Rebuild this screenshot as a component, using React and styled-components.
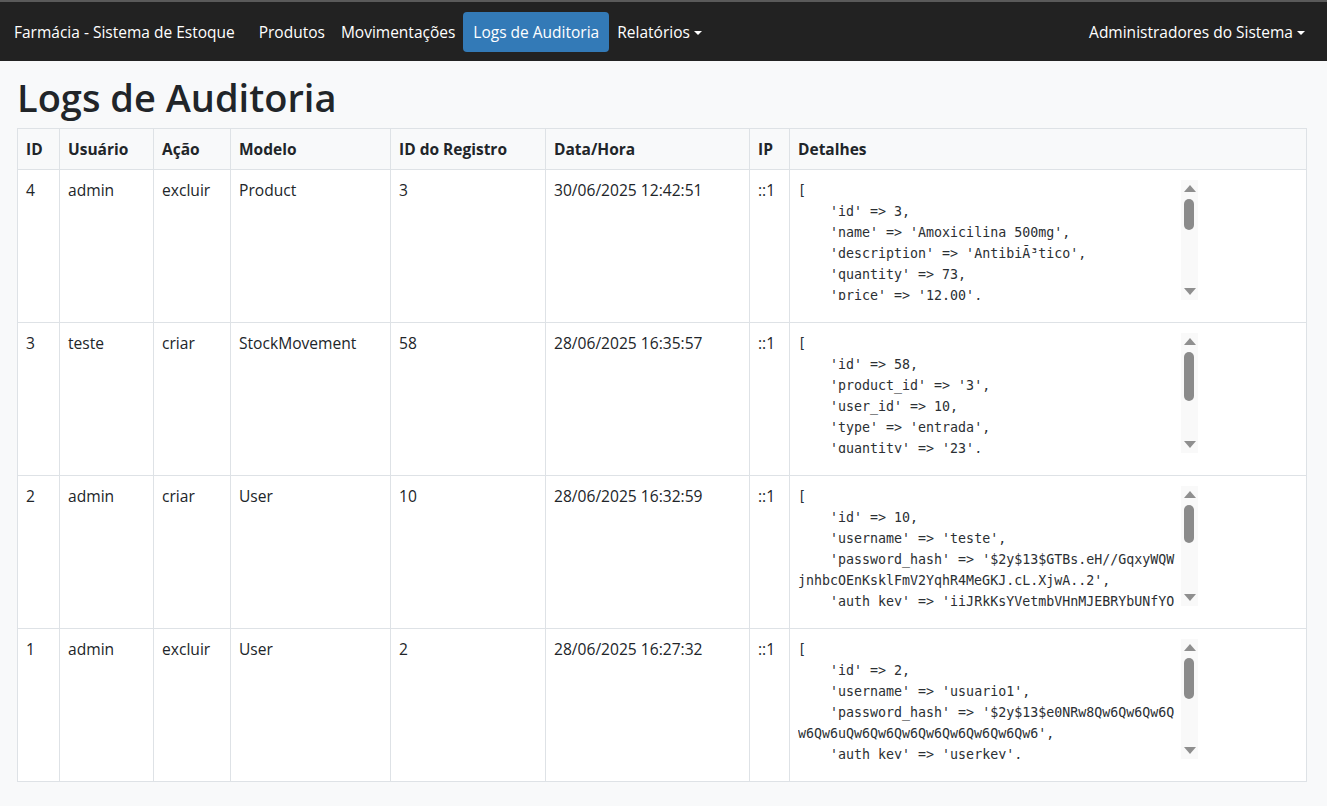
import React from 'react';
import styled, { createGlobalStyle } from 'styled-components';

const GlobalStyle = createGlobalStyle`
    html, body {
        margin: 0;
        padding: 0;
        background: #f8f9fa;
        color: #212529;
        font-family: "Open Sans", "Noto Sans", sans-serif;
    }
    * {
        box-sizing: border-box;
    }
`;

const Navbar = styled.nav`
    display: flex;
    align-items: center;
    height: 61px;
    padding: 0 14px;
    background: #222222;
    border-top: 2px solid #5a5a5a;
    font-size: 15.5px;
`;

const Brand = styled.a`
    color: #fff;
    margin-right: 16px;
    white-space: nowrap;
`;

const NavList = styled.div`
    display: flex;
    align-items: center;
    flex: 1;
`;

const NavLink = styled.a`
    display: flex;
    align-items: center;
    height: 40px;
    padding: 0 ${(p) => (p.$active ? '10px' : '8px')};
    border-radius: 4px;
    color: #fff;
    white-space: nowrap;
    background: ${(p) => (p.$active ? '#337ab7' : 'transparent')};
`;

const Caret = styled.span`
    display: inline-block;
    margin-left: 4px;
    border-top: 4px solid #fff;
    border-left: 4px solid transparent;
    border-right: 4px solid transparent;
    transform: translateY(1px);
`;

const Main = styled.main`
    padding: 12px 21px 24px 17px;
`;

const Title = styled.h1`
    margin: 0 0 7px;
    font-size: 38px;
    font-weight: 600;
    line-height: 48px;
`;

const Table = styled.table`
    width: 1289px;
    border-collapse: collapse;
    table-layout: fixed;
    background: #fff;
    font-size: 15.6px;
`;

const Th = styled.th`
    height: 41px;
    padding: 8px;
    text-align: left;
    font-size: 15.5px;
    font-weight: 700;
    line-height: 24px;
    background: #f8f9fa;
    border: 1px solid #dee2e6;
`;

const Td = styled.td`
    padding: 8px;
    vertical-align: top;
    line-height: 24px;
    font-weight: 400;
    border: 1px solid #dee2e6;
`;

const ScrollArea = styled.div`
    display: flex;
    width: 400px;
    height: 120px;
    margin: 2px 0 14px;
`;

const Code = styled.pre`
    flex: 1;
    margin: 0;
    overflow: hidden;
    font-family: "DejaVu Sans Mono", "Liberation Mono", monospace;
    font-size: 13.3px;
    line-height: 21px;
    white-space: pre-wrap;
    word-break: break-all;
    color: #2b2f33;
`;

const Scrollbar = styled.div`
    display: flex;
    flex-direction: column;
    width: 17px;
    background: #f9f9f9;
`;

const Arrow = styled.div`
    display: flex;
    align-items: center;
    justify-content: center;
    height: 17px;

    &::before {
        content: '';
        border-left: 6px solid transparent;
        border-right: 6px solid transparent;
        ${(p) => (p.$down ? 'border-top: 7px solid #8f8f8f;' : 'border-bottom: 7px solid #8f8f8f;')}
    }
`;

const Track = styled.div`
    flex: 1;
    padding: 2px 4px 0 3px;
`;

const Thumb = styled.div`
    width: 10px;
    border-radius: 5px;
    background: #8b8b8b;
`;

const columns = [
    { label: 'ID', width: 42 },
    { label: 'Usuário', width: 94 },
    { label: 'Ação', width: 77 },
    { label: 'Modelo', width: 160 },
    { label: 'ID do Registro', width: 155 },
    { label: 'Data/Hora', width: 204 },
    { label: 'IP', width: 40 },
    { label: 'Detalhes', width: 517 },
];

const logs = [
    {
        id: 4, user: 'admin', action: 'excluir', model: 'Product', recordId: 3,
        date: '30/06/2025 12:42:51', ip: '::1', lines: 16,
        details: `[
    'id' => 3,
    'name' => 'Amoxicilina 500mg',
    'description' => 'AntibiÃ³tico',
    'quantity' => 73,
    'price' => '12.00',
    'expiry_date' => '2026-03-15',
    'category_id' => 2,
    'supplier' => 'EMS',
    'barcode' => '7891234567890',
    'min_stock' => 10,
    'created_at' => 1750000000,
    'updated_at' => 1751290971,
    'created_by' => 1,
    'updated_by' => 1,
]`,
    },
    {
        id: 3, user: 'teste', action: 'criar', model: 'StockMovement', recordId: 58,
        date: '28/06/2025 16:35:57', ip: '::1', lines: 10,
        details: `[
    'id' => 58,
    'product_id' => '3',
    'user_id' => 10,
    'type' => 'entrada',
    'quantity' => '23',
    'reason' => 'Compra',
    'created_at' => 1751139357,
    'updated_at' => 1751139357,
]`,
    },
    {
        id: 2, user: 'admin', action: 'criar', model: 'User', recordId: 10,
        date: '28/06/2025 16:32:59', ip: '::1', lines: 13,
        details: `[
    'id' => 10,
    'username' => 'teste',
    'password_hash' => '$2y$13$GTBs.eH//GqxyWQWjnhbcOEnKsklFmV2YqhR4MeGKJ.cL.XjwA..2',
    'auth_key' => 'iiJRkKsYVetmbVHnMJEBRYbUNfYOq8Zt',
    'email' => 'teste@farmacia.com',
    'status' => 10,
    'role' => 'user',
    'created_at' => 1751139179,
    'updated_at' => 1751139179,
]`,
    },
    {
        id: 1, user: 'admin', action: 'excluir', model: 'User', recordId: 2,
        date: '28/06/2025 16:27:32', ip: '::1', lines: 12,
        details: `[
    'id' => 2,
    'username' => 'usuario1',
    'password_hash' => '$2y$13$e0NRw8Qw6Qw6Qw6Qw6Qw6uQw6Qw6Qw6Qw6Qw6Qw6Qw6Qw6',
    'auth_key' => 'userkey',
    'email' => 'usuario1@farmacia.com',
    'status' => 10,
    'role' => 'user',
    'created_at' => 1750000000,
    'updated_at' => 1750000000,
]`,
    },
];

// track is 86px long; thumb length follows visible / total content height
const thumbHeight = (lines) => Math.round((86 * 120) / (lines * 21));

const App = () => {
    return (
        <>
            <GlobalStyle />
            <Navbar>
                <Brand>Farmácia - Sistema de Estoque</Brand>
                <NavList>
                    <NavLink>Produtos</NavLink>
                    <NavLink>Movimentações</NavLink>
                    <NavLink $active>Logs de Auditoria</NavLink>
                    <NavLink>Relatórios<Caret /></NavLink>
                </NavList>
                <NavLink>Administradores do Sistema<Caret /></NavLink>
            </Navbar>
            <Main>
                <Title>Logs de Auditoria</Title>
                <Table>
                    <colgroup>
                        {columns.map((c) => (
                            <col key={c.label} style={{ width: c.width }} />
                        ))}
                    </colgroup>
                    <thead>
                        <tr>
                            {columns.map((c) => (
                                <Th key={c.label}>{c.label}</Th>
                            ))}
                        </tr>
                    </thead>
                    <tbody>
                        {logs.map((log) => (
                            <tr key={log.id}>
                                <Td>{log.id}</Td>
                                <Td>{log.user}</Td>
                                <Td>{log.action}</Td>
                                <Td>{log.model}</Td>
                                <Td>{log.recordId}</Td>
                                <Td>{log.date}</Td>
                                <Td>{log.ip}</Td>
                                <Td>
                                    <ScrollArea>
                                        <Code>{log.details}</Code>
                                        <Scrollbar>
                                            <Arrow />
                                            <Track>
                                                <Thumb style={{ height: thumbHeight(log.lines) }} />
                                            </Track>
                                            <Arrow $down />
                                        </Scrollbar>
                                    </ScrollArea>
                                </Td>
                            </tr>
                        ))}
                    </tbody>
                </Table>
            </Main>
        </>
    );
};

export default App;
